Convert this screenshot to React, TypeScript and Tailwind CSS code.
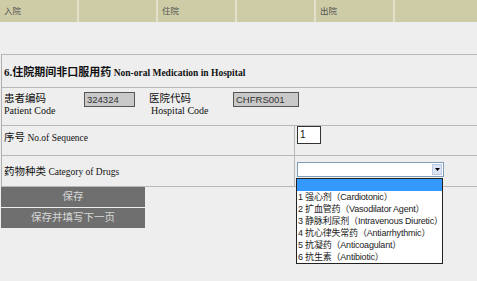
import React from 'react';

const headerCells = ['入院', '', '住院', '', '出院', ''];

const drugOptions = [
  '1 强心剂（Cardiotonic）',
  '2 扩血管药（Vasodilator Agent）',
  '3 静脉利尿剂（Intravenous Diuretic）',
  '4 抗心律失常药（Antiarrhythmic）',
  '5 抗凝药（Anticoagulant）',
  '6 抗生素（Antibiotic）',
];

const serif = { fontFamily: '"Liberation Serif", "Noto Sans CJK SC", serif' };
const sans = { fontFamily: '"Liberation Sans", "Noto Sans CJK SC", sans-serif' };

const Cn: React.FC<{ children: React.ReactNode }> = ({ children }) => (
  <span className="text-[10.5px]">{children}</span>
);

const App: React.FC = () => {
  return (
    <div className="relative w-[477px] h-[281px] overflow-hidden bg-[#eeeeee] text-[#111]" style={serif}>
      {/* tab header */}
      <div className="flex h-[22px] bg-[#cdcca6]" style={sans}>
        {headerCells.map((label, i) => (
          <div
            key={i}
            className={`flex items-center pl-[4px] text-[8.5px] text-[#555] ${i < 5 ? 'w-[79px] border-r-2 border-[#e2e1cb]' : 'flex-1'}`}
          >
            {label}
          </div>
        ))}
      </div>

      <div className="h-[32px]" />

      <div className="ml-px border-l border-[#b0b0b0]">
        {/* title */}
        <div className="h-[34px] border-t border-b border-[#b8b8b8] pl-[2px] pt-[4px] font-bold">
          <span className="text-[11px]">6.住院期间非口服用药</span>
          <span className="text-[9.5px]"> Non-oral Medication in Hospital</span>
        </div>

        {/* codes */}
        <div className="flex h-[38px] border-b border-[#b8b8b8] pt-[3px] pl-[2px]">
          <div className="w-[80px] leading-[12px]">
            <div><Cn>患者编码</Cn></div>
            <div className="text-[10px]">Patient Code</div>
          </div>
          <div
            className="mt-px h-[15px] w-[51px] border border-[#555] bg-[#c9c9c9] pl-[2px] text-[9.5px] leading-[13px] text-[#333]"
            style={sans}
          >
            324324
          </div>
          <div className="ml-[14px] w-[84px] leading-[12px]">
            <div><Cn>医院代码</Cn></div>
            <div className="text-[10px] pl-[2px]">Hospital Code</div>
          </div>
          <div
            className="mt-px h-[15px] w-[66px] border border-[#555] bg-[#c9c9c9] pl-[2px] text-[9.5px] leading-[13px] text-[#333]"
            style={sans}
          >
            CHFRS001
          </div>
        </div>

        {/* sequence */}
        <div className="flex h-[30px] border-b border-[#b8b8b8]">
          <div className="w-[293px] border-r border-[#b8b8b8] pl-[2px] pt-[4px] leading-[12px]">
            <Cn>序号</Cn>
            <span className="text-[9.5px]"> No.of Sequence</span>
          </div>
          <div className="pl-[2px]">
            <div
              className="h-[18px] w-[24px] border border-[#333] bg-white pl-[2px] text-[10px] leading-[16px]"
              style={sans}
            >
              1
            </div>
          </div>
        </div>

        {/* category */}
        <div className="flex h-[31px] border-b border-[#b8b8b8]">
          <div className="w-[293px] border-r border-[#b8b8b8] pl-[2px] pt-[8px] leading-[12px]">
            <Cn>药物种类</Cn>
            <span className="text-[9.5px]"> Category of Drugs</span>
          </div>
          <div className="pl-[2px] pt-[6px]">
            <div className="flex h-[15px] w-[147px] border border-[#7f9db9] bg-white">
              <div className="flex-1" />
              <div className="m-px flex w-[10px] items-center justify-center border border-[#b9c9e6] bg-[#dbe4f5]">
                <svg width="5" height="3" viewBox="0 0 5 3">
                  <path d="M0 0h5L2.5 3z" fill="#000" />
                </svg>
              </div>
            </div>
          </div>
        </div>
      </div>

      {/* buttons */}
      <div className="ml-px flex w-[144px] flex-col gap-px" style={sans}>
        <button className="h-[20px] bg-[#6f6f6f] text-[10.5px] text-[#d8d8d8]">保存</button>
        <button className="h-[20px] bg-[#6f6f6f] text-[10.5px] text-[#d8d8d8]">保存并填写下一页</button>
      </div>

      {/* open select list */}
      <div
        className="absolute left-[296px] top-[178px] w-[147px] border border-[#222] bg-white text-[9px] leading-[12px] tracking-[-0.2px] text-[#222]"
        style={sans}
      >
        <div className="h-[12px] bg-[#3399ff]" />
        {drugOptions.map(opt => (
          <div key={opt} className="h-[12px] pl-[1px] whitespace-nowrap">
            {opt}
          </div>
        ))}
      </div>
    </div>
  );
};

export default App;
